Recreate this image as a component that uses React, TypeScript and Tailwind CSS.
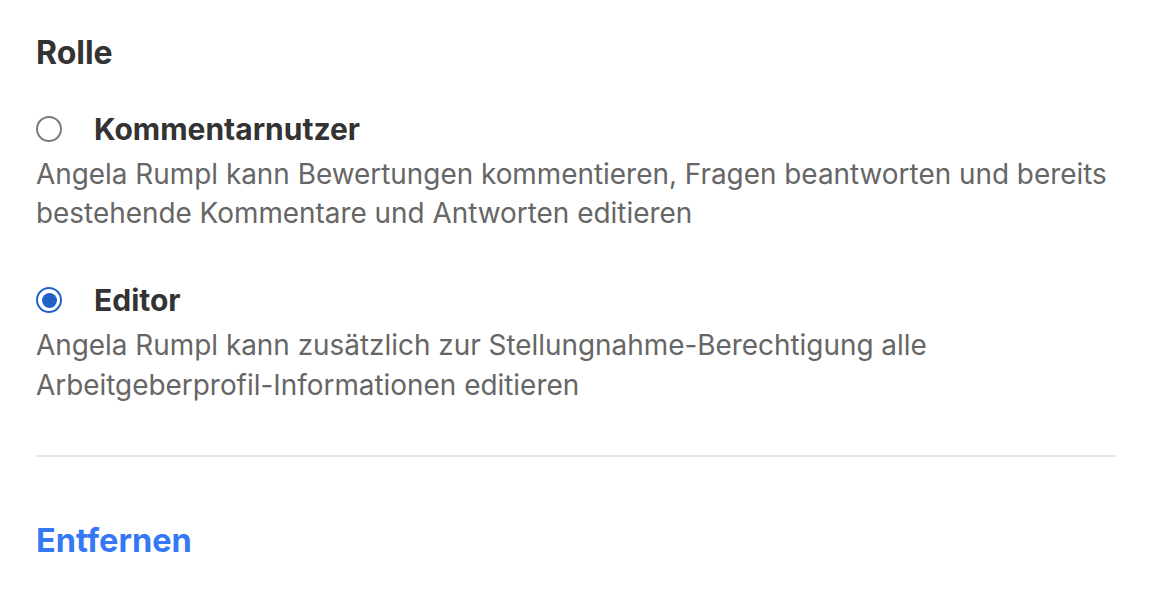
const roles = [
  {
    id: "kommentar",
    name: "Kommentarnutzer",
    text: "Angela Rumpl kann Bewertungen kommentieren, Fragen beantworten und bereits bestehende Kommentare und Antworten editieren",
    checked: false
  },
  {
    id: "editor",
    name: "Editor",
    text: "Angela Rumpl kann zusätzlich zur Stellungnahme-Berechtigung alle Arbeitgeberprofil-Informationen editieren",
    checked: true
  }
];

function Radio({ checked }: { checked: boolean }) {
  if (checked) {
    return (
      <span className="flex h-[26px] w-[26px] shrink-0 items-center justify-center rounded-full border-[2.5px] border-[#2361c8]">
        <span className="h-[15px] w-[15px] rounded-full bg-[#2361c8]" />
      </span>
    );
  }
  return <span className="h-[26px] w-[26px] shrink-0 rounded-full border-2 border-[#7a7a7a]" />;
}

export default function App() {
  return (
    <div className="min-h-screen bg-white font-['Inter',sans-serif]">
      <section className="w-[1116px] pl-9 pt-[34px]">
        <h2 className="text-[32px] font-bold leading-[38px] text-[#333333]">Rolle</h2>
        <div className="mt-[39px] flex flex-col gap-[49px]">
          {roles.map((role) => (
            <label key={role.id} className="flex flex-col gap-2">
              <div className="flex h-9 items-center">
                <Radio checked={role.checked} />
                <span className="ml-8 text-[30px] font-bold leading-9 text-[#333333]">{role.name}</span>
              </div>
              <p className="text-[27.9px] leading-[39.2px] text-[#666666]">{role.text}</p>
            </label>
          ))}
        </div>
        <hr className="mt-[50px] border-t-2 border-[#e6e6e6]" />
        <button className="mt-[65px] text-[32.5px] font-bold leading-[38px] text-[#3478f6]">Entfernen</button>
      </section>
    </div>
  );
}
